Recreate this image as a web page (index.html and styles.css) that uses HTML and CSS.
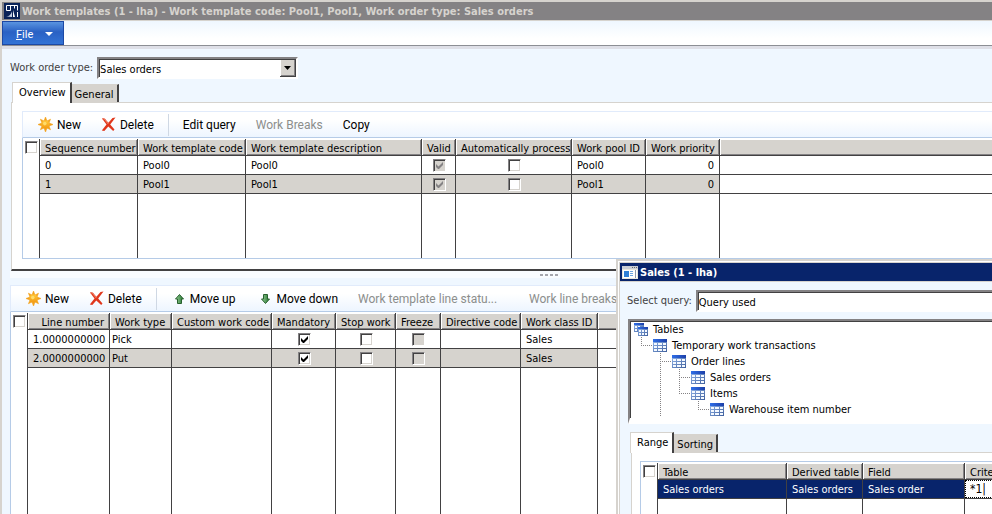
FILE: index.html
```html
<!DOCTYPE html>
<html lang="en">
<head>
<meta charset="utf-8">
<title>Work templates</title>
<link rel="stylesheet" href="styles.css">
</head>
<body>
<svg class="defs" width="0" height="0" aria-hidden="true">
  <defs>
    <linearGradient id="sunFill" x1="0" y1="0" x2="0" y2="1"><stop offset="0" stop-color="#ffc83a"/><stop offset="1" stop-color="#f39a14"/></linearGradient>
    <linearGradient id="greenFill" x1="0" y1="0" x2="1" y2="0"><stop offset="0" stop-color="#9ad29a"/><stop offset="1" stop-color="#1f6f2b"/></linearGradient>
    <linearGradient id="tableHead" x1="0" y1="0" x2="1" y2="0"><stop offset="0" stop-color="#2f6fe8"/><stop offset="1" stop-color="#1c3fa8"/></linearGradient>
    <linearGradient id="tableBody" x1="0" y1="0" x2="1" y2="1"><stop offset="0" stop-color="#94b8ee"/><stop offset="1" stop-color="#3f5f9c"/></linearGradient>
  </defs>
  <symbol id="i-new" viewBox="0 0 15 15">
    <path d="M7.500 0L9 4l3.500-1.800L11 6l4 1.500L11 9l1.500 3.700L9 11l-1.500 4L6 11l-3.600 1.700L4 9 0 7.500 4 6 2.400 2.200 6 4z" fill="#f3a21c" stroke="#f3a21c" stroke-width=".6"/>
    <circle cx="7.500" cy="7.500" r="4" fill="url(#sunFill)"/>
    <circle cx="6.800" cy="6.600" r="1.800" fill="#ffdc6a"/>
  </symbol>
  <symbol id="i-delete" viewBox="0 0 15 15">
    <path d="M1 1.500c2-.8 3.200 0 4.200 1.700L7.400 5.700 11.500 1 14.500.5 9.200 7.500 13.500 12.500 12.200 14 7.300 9.500 3.300 14 .8 13.500 5.500 7.500z" fill="#e0371c"/>
    <path d="M1.500 2c1.500-.5 2.300.3 3 1.500L7.300 7" stroke="#f58a70" fill="none"/>
  </symbol>
  <symbol id="i-up" viewBox="0 0 9 10"><path d="M4.500.5L8.500 5H6.500V9.500H2.500V5H.5z" fill="url(#greenFill)" stroke="#28612e"/></symbol>
  <symbol id="i-down" viewBox="0 0 9 10"><path d="M4.500 9.500L8.500 5H6.500V.5H2.500V5H.5z" fill="url(#greenFill)" stroke="#28612e"/></symbol>
  <symbol id="i-table" viewBox="0 0 14 13">
    <path d="M0 0h14v13H0z" fill="url(#tableBody)"/>
    <path d="M0 0h14v3H0z" fill="url(#tableHead)"/>
    <path d="M1 4h3v2H1zM5 4h4v2H5zM10 4h3v2h-3zM1 7h3v2H1zM5 7h4v2H5zM10 7h3v2h-3zM1 10h3v2H1zM5 10h4v2H5zM10 10h3v2h-3z" fill="#f4f9ff"/>
  </symbol>
  <symbol id="i-tables" viewBox="0 0 14 13">
    <path d="M0 0h10v9H0z" fill="url(#tableBody)"/><path d="M0 0h10v2H0z" fill="url(#tableHead)"/>
    <path d="M1 3h2v2H1zM4 3h2v2H4zM1 6h2v2H1z" fill="#f4f9ff"/>
    <path d="M4 4h10v9H4z" fill="url(#tableBody)"/><path d="M4 4h10v2H4z" fill="url(#tableHead)"/>
    <path d="M5 7h2v2H5zM8 7h2v2H8zM11 7h2v2h-2zM5 10h2v2H5zM8 10h2v2H8zM11 10h2v2h-2z" fill="#f4f9ff"/>
  </symbol>
</svg>

<main class="window">
  <header class="titlebar">
    <svg class="app-icon" viewBox="0 0 16 16" aria-hidden="true">
      <path d="M0 0h16v16H0z" fill="#0a2358"/>
      <path d="M2.500 7.500v-5h11v5M2.500 7.500h4v-5M10.500 2.500v3" fill="none" stroke="#fff"/>
      <path d="M2 13.500c3 0 5-2 6-5V14z" fill="#c9d3e6"/>
      <path d="M9 7l2 7H9zM13 9h1v5h-1z" fill="#fff"/>
    </svg>
    <h1>Work templates (1 - lha) - Work template code: Pool1, Pool1, Work order type: Sales orders</h1>
  </header>
  <nav class="menubar">
    <button class="file" type="button"><span><u>F</u>ile</span><i class="caret"></i></button>
  </nav>

  <div class="content">
    <div class="field">
      <label for="order-type">Work order type:</label>
      <select id="order-type"><option>Sales orders</option></select>
    </div>

    <div class="tabs">
      <button class="tab active" type="button">Overview</button><button class="tab" type="button">General</button>
    </div>
    <section class="panel">
      <div class="toolbar">
        <button type="button"><svg class="ico"><use href="#i-new"/></svg>New</button>
        <button type="button"><svg class="ico"><use href="#i-delete"/></svg>Delete</button>
        <span class="sep"></span>
        <button type="button">Edit query</button>
        <button type="button" disabled>Work Breaks</button>
        <button type="button">Copy</button>
      </div>
      <div class="grid">
        <table>
          <colgroup><col class="w17"><col class="w98"><col class="w108"><col class="w176"><col class="w34"><col class="w116"><col class="w74"><col class="w74"><col></colgroup>
          <thead><tr><th class="pick"><input type="checkbox" aria-label="Select all templates"></th><th>Sequence number</th><th>Work template code</th><th>Work template description</th><th>Valid</th><th>Automatically process</th><th>Work pool ID</th><th>Work priority</th><th></th></tr></thead>
          <tbody>
            <tr><td class="pick"></td><td>0</td><td>Pool0</td><td>Pool0</td><td class="mid"><input type="checkbox" checked disabled aria-label="Valid"></td><td class="mid"><input type="checkbox" aria-label="Automatically process"></td><td>Pool0</td><td class="num">0</td><td class="rest"></td></tr>
            <tr class="current"><td class="pick"></td><td>1</td><td>Pool1</td><td>Pool1</td><td class="mid"><input type="checkbox" checked disabled aria-label="Valid"></td><td class="mid"><input type="checkbox" aria-label="Automatically process"></td><td>Pool1</td><td class="num">0</td><td class="rest"></td></tr>
            <tr class="filler short"><td class="pick"></td><td></td><td></td><td></td><td></td><td></td><td></td><td></td><td class="rest"></td></tr>
          </tbody>
        </table>
      </div>
    </section>

    <div class="splitter"><i></i><i></i><i></i><i></i></div>

    <section class="lines">
      <div class="toolbar">
        <button type="button"><svg class="ico"><use href="#i-new"/></svg>New</button>
        <button type="button"><svg class="ico"><use href="#i-delete"/></svg>Delete</button>
        <span class="sep wide"></span>
        <button type="button"><svg class="arrow"><use href="#i-up"/></svg>Move up</button>
        <button class="move-down" type="button"><svg class="arrow"><use href="#i-down"/></svg>Move down</button>
        <button class="status" type="button" disabled>Work template line statu...</button>
        <button type="button" disabled>Work line breaks</button>
      </div>
      <div class="grid grow">
        <table>
          <colgroup><col class="w17"><col class="w82"><col class="w62"><col class="w100"><col class="w64"><col class="w60"><col class="w45"><col class="w80"><col class="w77"><col></colgroup>
          <thead><tr><th class="pick"><input type="checkbox" aria-label="Select all lines"></th><th class="num">Line number</th><th>Work type</th><th>Custom work code</th><th>Mandatory</th><th>Stop work</th><th>Freeze</th><th>Directive code</th><th>Work class ID</th><th></th></tr></thead>
          <tbody>
            <tr><td class="pick"></td><td class="num">1.0000000000</td><td class="tight">Pick</td><td></td><td class="mid"><input type="checkbox" checked aria-label="Mandatory"></td><td class="mid"><input type="checkbox" aria-label="Stop work"></td><td class="mid"><input type="checkbox" disabled aria-label="Freeze"></td><td></td><td>Sales</td><td class="rest"></td></tr>
            <tr class="current"><td class="pick"></td><td class="num">2.0000000000</td><td class="tight">Put</td><td></td><td class="mid"><input type="checkbox" checked aria-label="Mandatory"></td><td class="mid"><input type="checkbox" aria-label="Stop work"></td><td class="mid"><input type="checkbox" disabled aria-label="Freeze"></td><td></td><td>Sales</td><td class="rest"></td></tr>
            <tr class="filler"><td class="pick"></td><td></td><td></td><td></td><td></td><td></td><td></td><td></td><td></td><td class="rest"></td></tr>
          </tbody>
        </table>
      </div>
    </section>
  </div>

  <section class="dialog" role="dialog" aria-labelledby="dialog-title">
    <header class="titlebar active">
      <svg class="form-icon" viewBox="0 0 16 13" aria-hidden="true">
        <path d="M0 0h16v13H0z" fill="#e9e6dc"/><path d="M0 0h16v3H0z" fill="#c9cdd4"/>
        <path d="M10 1h1v1h-1zM12 1h1v1h-1zM14 1h1v1h-1z" fill="#666"/>
        <path d="M1 4h14v8H1z" fill="#fff"/><path d="M2 5h5v6H2z" fill="#2f7fd6"/>
        <path d="M8 5h3v1H8zM8 7h3v1H8zM8 9h3v1H8z" fill="#6fa6df"/><path d="M13 4h1v8h-1z" fill="#8f9aa8"/>
      </svg>
      <h2 id="dialog-title">Sales (1 - lha)</h2>
    </header>
    <div class="dialog-body">
      <div class="field query">
        <label for="query">Select query:</label>
        <select id="query"><option>Query used</option></select>
      </div>
      <div class="tree">
        <div class="node"><svg><use href="#i-tables"/></svg>Tables</div>
        <div class="node"><i class="ell"></i><svg><use href="#i-table"/></svg>Temporary work transactions</div>
        <div class="node"><i></i><i class="tee"></i><svg><use href="#i-table"/></svg>Order lines</div>
        <div class="node"><i></i><i class="bar"></i><i class="tee"></i><svg><use href="#i-table"/></svg>Sales orders</div>
        <div class="node"><i></i><i class="bar"></i><i class="ell"></i><svg><use href="#i-table"/></svg>Items</div>
        <div class="node"><i></i><i class="bar"></i><i></i><i class="ell"></i><svg><use href="#i-table"/></svg>Warehouse item number</div>
      </div>
      <div class="tabs">
        <button class="tab active" type="button">Range</button><button class="tab" type="button">Sorting</button>
      </div>
      <div class="panel range">
        <div class="grid grow">
          <table>
            <colgroup><col class="w17"><col class="w129"><col class="w76"><col class="w102"><col></colgroup>
            <thead><tr><th class="pick"><input type="checkbox" aria-label="Select all ranges"></th><th>Table</th><th>Derived table</th><th>Field</th><th>Criteria</th></tr></thead>
            <tbody>
              <tr class="selected"><td class="pick"></td><td>Sales orders</td><td>Sales orders</td><td>Sales order</td><td class="edit"><input type="text" value="*1|" aria-label="Criteria"></td></tr>
              <tr class="filler"><td class="pick"></td><td></td><td></td><td></td><td class="rest"></td></tr>
            </tbody>
          </table>
        </div>
      </div>
    </div>
  </section>
</main>
</body>
</html>
```
FILE: styles.css
```css
:root {
  --face: #d6d3ce;
  --shade: #848284;
  --ink: #424142;
  --page: #eff7ff;
  --rule: #b5cbe7;
  --navy: #08246b;
}
* { box-sizing: border-box; }
body, button, select, input {
  font-family: "DejaVu Sans Condensed", "DejaVu Sans", sans-serif;
  font-size: 11px;
  color: #000;
}
body { margin: 0; }
.defs { position: absolute; }
button { margin: 0; padding: 0; border: 0; background: none; white-space: nowrap; }

.window {
  position: relative;
  display: flex;
  flex-direction: column;
  height: 100vh;
  overflow: hidden;
  border: solid var(--face);
  border-width: 2px 0 0 2px;
  background: var(--page);
}
.titlebar {
  display: flex;
  align-items: center;
  flex: none;
  gap: 2px;
  height: 19px;
  padding-left: 2px;
  border-bottom: 1px solid var(--face);
  background: var(--shade);
  color: var(--face);
}
.titlebar.active { background: var(--navy); color: #fff; }
.titlebar h1, .titlebar h2 { margin: 0; font-size: 11px; font-weight: bold; white-space: nowrap; }
.app-icon { width: 16px; height: 16px; }
.form-icon { width: 16px; height: 13px; }

.menubar {
  flex: none;
  height: 28px;
  border-bottom: 3px solid #dedfe7;
  background: linear-gradient(#eff7ff, #fff 70%);
  box-shadow: inset 0 -1px #8c8e94;
}
.file {
  display: flex;
  align-items: center;
  gap: 12px;
  height: 24px;
  padding: 2px 10px 0 13px;
  border: 1px solid #1c49a5;
  background: linear-gradient(#5a94e0, #2a61c4 45%, #3273d6);
  color: #fff;
  font: 11px Roboto, sans-serif;
}
.caret { border: 4px solid transparent; border-top-color: #fff; border-bottom: 0; }

.content { display: flex; flex: 1; flex-direction: column; min-height: 0; padding: 8px 0 0 8px; }
.field { display: flex; flex: none; gap: 4px; height: 22px; color: #424142; }
.field label { padding-top: 4px; white-space: nowrap; }
.field select {
  width: 201px;
  height: 22px;
  padding: 2px 0 0 0;
  appearance: none;
  border: 2px solid;
  border-color: var(--shade) #fff #fff var(--shade);
  border-radius: 0;
  outline: 0;
  text-indent: 1px;
  background:
    url("data:image/svg+xml,%3Csvg xmlns='http://www.w3.org/2000/svg' width='16' height='18'%3E%3Cpath d='M0 0h16v18H0z' fill='%23424142'/%3E%3Cpath d='M0 0h15v17H0z' fill='%23fff'/%3E%3Cpath d='M1 1h14v16H1z' fill='%23848284'/%3E%3Cpath d='M1 1h13v15H1z' fill='%23d6d3ce'/%3E%3Cpath d='M4 7h7L7.500 11z'/%3E%3C/svg%3E") right top no-repeat #fff;
  box-shadow: inset 1px 1px var(--ink);
}

.tabs { display: flex; flex: none; align-items: flex-end; height: 21px; margin: 3px 0 -1px 2px; }
.tab {
  height: 19px;
  padding: 2px 3px 0;
  border: solid;
  border-width: 1px 2px 1px 0;
  border-color: var(--face) var(--ink) var(--face) #fff;
  background: var(--face);
}
.tab.active {
  z-index: 1;
  height: 21px;
  padding: 0 4px 1px 7px;
  border-bottom: 0;
  border-left: 0;
  background: #fff;
  box-shadow: inset 1px 0 var(--face);
}
.panel {
  flex: none;
  margin-left: 1px;
  padding: 8px 0 10px 10px;
  border: solid var(--face);
  border-width: 1px 0 0 1px;
  background: #fff;
}
.content > .panel { border-bottom: 2px solid var(--ink); }

.toolbar {
  display: flex;
  flex: none;
  align-items: center;
  gap: 20px;
  height: 27px;
  padding-left: 15px;
  overflow: hidden;
  border: solid var(--rule);
  border-color: #e1ebfb var(--rule) var(--rule) #e1ebfb;
  border-width: 1px 0 1px 1px;
  background: linear-gradient(#fff 30%, #edf5ff);
}
.toolbar button { display: flex; flex: none; align-items: center; gap: 4px; font: 12px Roboto, sans-serif; }
.toolbar button:disabled { color: #8c8e8c; }
.ico { width: 15px; height: 15px; }
.arrow { width: 9px; height: 10px; margin-right: 2px; }
.sep { width: 1px; height: 22px; margin: 0 -6px; background: #cfd8e4; }
.sep.wide { margin-right: -2px; }
.move-down { margin-left: 6px; }
.status { width: 151px; }

.splitter { display: flex; flex: none; justify-content: center; gap: 2px; height: 14px; padding: 3px 0 0 96px; background: linear-gradient(#f9fcff 50%, var(--page) 50%); }
.splitter i { width: 3px; height: 2px; background: #a5a6ad; }
.lines { display: flex; flex: 1; flex-direction: column; min-height: 0; }

.grid { flex: none; padding-top: 1px; border: solid var(--rule); border-width: 0 0 1px 1px; background: #fff; }
.grid.grow { flex: 1; min-height: 0; border-bottom: 0; }
.grid table { width: 100%; table-layout: fixed; border-spacing: 0; }
.grid.grow table { height: 100%; }
.grid th, .grid td {
  height: 19px;
  padding: 0 5px;
  overflow: hidden;
  border: solid var(--ink);
  border-width: 0 1px 1px 0;
  line-height: 13px;
  text-align: left;
  white-space: nowrap;
  font-weight: normal;
}
.grid th { height: 17px; padding: 2px 0 0 5px; background: var(--face); box-shadow: inset 1px 1px #fff, inset -1px -1px var(--shade); }
.grid th.num { padding-right: 5px; }
.grid .pick { padding: 0 0 0 2px; border-bottom: 0; background: #fff; box-shadow: none; }
.grid .num { text-align: right; }
.grid .mid { padding: 0 4px 0 5px; }
.grid .tight { padding-left: 2px; }
.grid th:last-child, .grid .rest { border-right: 0; }
.grid th:last-child { box-shadow: inset 1px 1px #fff, inset 0 -1px var(--shade); }
.grid .current td:not(.pick, .rest) { background: var(--face); }
.grid .selected td:not(.pick, .edit) { background: var(--navy); color: #fff; }
.grid .filler td { height: auto; border-bottom: 0; }
.grid .short td { height: 64px; }
.grid .edit { padding: 0; }
.edit input { display: block; width: 100%; height: 18px; padding: 0 4px; border: 1px dotted #000; outline: 0; font-size: 12px; }

input[type="checkbox"] {
  display: block;
  width: 13px;
  height: 13px;
  margin: 0 auto;
  appearance: none;
  border: 1px solid;
  border-color: var(--shade) #fff #fff var(--shade);
  background: center / 7px 7px no-repeat #fff;
  box-shadow: inset 1px 1px var(--ink), inset -1px -1px var(--face);
}
.pick input[type="checkbox"] { margin: 0; }
input[type="checkbox"]:disabled { background-color: var(--face); }
input[type="checkbox"]:checked { background-image: url("data:image/svg+xml,%3Csvg xmlns='http://www.w3.org/2000/svg' viewBox='0 0 7 7'%3E%3Cpath d='M0 2v3l2 2h1l4-4V0L2.500 4.500z'/%3E%3C/svg%3E"); }
input[type="checkbox"]:checked:disabled { background-image: url("data:image/svg+xml,%3Csvg xmlns='http://www.w3.org/2000/svg' viewBox='0 0 7 7'%3E%3Cpath d='M0 2v3l2 2h1l4-4V0L2.500 4.500z' fill='%23848284'/%3E%3C/svg%3E"); }

.w17 { width: 17px; } .w34 { width: 34px; } .w45 { width: 45px; } .w60 { width: 60px; }
.w62 { width: 62px; } .w64 { width: 64px; } .w74 { width: 74px; } .w76 { width: 76px; }
.w77 { width: 77px; } .w80 { width: 80px; } .w82 { width: 82px; } .w98 { width: 98px; }
.w100 { width: 100px; } .w102 { width: 102px; } .w108 { width: 108px; } .w116 { width: 116px; }
.w129 { width: 129px; } .w176 { width: 176px; }

/* The query dialog lies over the main form and runs past its right edge. */
.dialog {
  position: absolute;
  top: 257px;
  right: -40px;
  bottom: 0;
  left: 614px;
  display: flex;
  flex-direction: column;
  padding: 2px 0 0 2px;
  border: solid var(--face);
  border-width: 2px 0 0 2px;
  background: var(--face);
  box-shadow: inset 1px 1px #fff;
}
.dialog-body { display: flex; flex: 1; flex-direction: column; min-height: 0; padding: 8px 0 0 7px; background: var(--page); }
.query select { flex: 1; }
.tree {
  flex: none;
  height: 105px;
  margin: 7px 0 0 1px;
  padding: 0 0 0 4px;
  border: 2px solid;
  border-color: var(--shade) #fff #fff var(--shade);
  border-bottom-width: 6px;
  background: #fff;
  box-shadow: inset 1px 1px var(--ink);
}
.node { display: flex; align-items: center; height: 16px; white-space: nowrap; }
.node svg { width: 14px; height: 13px; margin-right: 5px; }
.node i {
  width: 19px;
  height: 16px;
  background-repeat: no-repeat;
  --down: repeating-linear-gradient(#848284 0 1px, transparent 1px 2px);
  --across: repeating-linear-gradient(90deg, #848284 0 1px, transparent 1px 2px);
}
.node .bar { background-image: var(--down); background-position: 7px 0; background-size: 1px 16px; }
.node .ell { background-image: var(--down), var(--across); background-position: 7px 0, 7px 8px; background-size: 1px 8px, 12px 1px; }
.node .tee { background-image: var(--down), var(--across); background-position: 7px 0, 7px 8px; background-size: 1px 16px, 12px 1px; }
.dialog .tabs { margin: 8px 0 -1px 3px; }
.range { display: flex; flex: 1; min-height: 0; margin-left: 4px; padding: 8px 0 0 8px; }
.range .grid { border-top: 1px solid var(--rule); }
```
